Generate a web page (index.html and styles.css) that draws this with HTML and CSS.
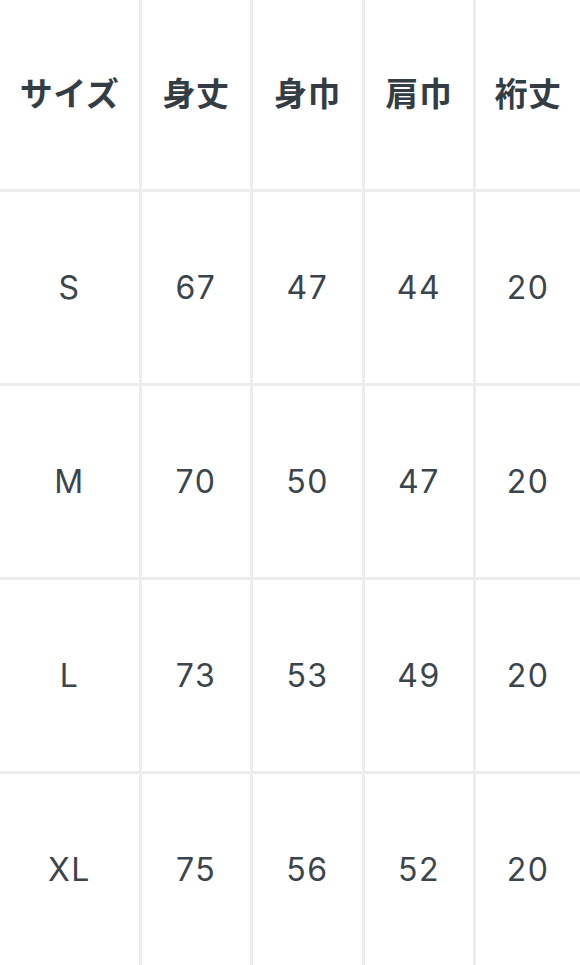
FILE: index.html
```html
<!DOCTYPE html>
<html lang="ja">
<head>
<meta charset="utf-8">
<link rel="stylesheet" href="styles.css">
</head>
<body>
<div class="table">
  <div class="cell head">サイズ</div>
  <div class="cell head">身丈</div>
  <div class="cell head">身巾</div>
  <div class="cell head">肩巾</div>
  <div class="cell head">裄丈</div>

  <div class="cell">S</div>
  <div class="cell">67</div>
  <div class="cell">47</div>
  <div class="cell">44</div>
  <div class="cell">20</div>

  <div class="cell">M</div>
  <div class="cell">70</div>
  <div class="cell">50</div>
  <div class="cell">47</div>
  <div class="cell">20</div>

  <div class="cell">L</div>
  <div class="cell">73</div>
  <div class="cell">53</div>
  <div class="cell">49</div>
  <div class="cell">20</div>

  <div class="cell">XL</div>
  <div class="cell">75</div>
  <div class="cell">56</div>
  <div class="cell">52</div>
  <div class="cell">20</div>
</div>
</body>
</html>
```
FILE: styles.css
```css
html, body {
  margin: 0;
  padding: 0;
  background: #ffffff;
}
.table {
  width: 580px;
  height: 965px;
  display: grid;
  grid-template-columns: 139px 108px 109px 108px 1fr;
  grid-template-rows: 189px 191px 191px 191px 191px;
  gap: 3px;
  background: #ececec;
  overflow: hidden;
}
.cell {
  background: #ffffff;
  display: flex;
  align-items: center;
  justify-content: center;
  font-family: Inter, "Liberation Sans", "Noto Sans CJK JP", sans-serif;
  font-size: 32px;
  font-weight: 400;
  letter-spacing: 1.5px;
  color: #3d454c;
}
.head {
  font-family: "Noto Sans CJK JP", sans-serif;
  font-weight: 700;
  font-size: 33px;
  letter-spacing: 0.5px;
  color: #353d44;
  padding-bottom: 6px;
}
```
